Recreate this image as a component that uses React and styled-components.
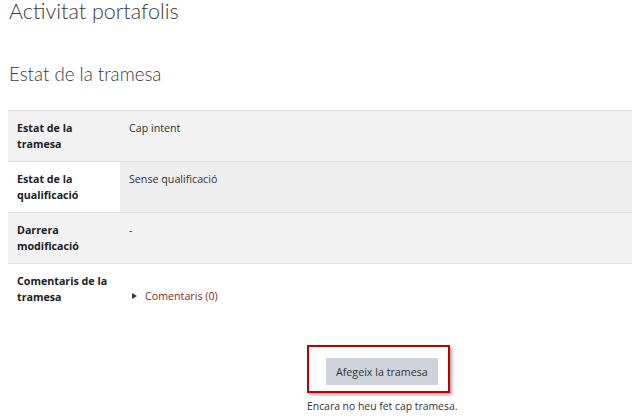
import React from "react";
import styled, { createGlobalStyle } from "styled-components";

const GlobalStyle = createGlobalStyle`
  body {
    margin: 0 0 0 8px;
    background: #fff;
    color: #333;
    font-family: "Open Sans", "Noto Sans", sans-serif;
    overflow: hidden;
  }
`;

const Page = styled.div`
  width: 624px;
`;

const Title = styled.h2`
  margin: 0 0 0 1px;
  padding-top: 1px;
  font-family: Lato, "Open Sans", sans-serif;
  font-size: 21.5px;
  line-height: 21px;
  font-weight: 300;
  color: #3a3a3a;
`;

const SectionTitle = styled.h3`
  margin: 43px 0 26px 1px;
  font-family: Lato, "Open Sans", sans-serif;
  font-size: 18.7px;
  line-height: 19px;
  font-weight: 300;
  color: #3a3a3a;
`;

const StatusTable = styled.table`
  width: 100%;
  border-collapse: collapse;
  font-size: 10.7px;
  line-height: 16px;
`;

const Row = styled.tr`
  border-top: 1px solid #dee2e6;
  background: ${({ striped }) => (striped ? "#f2f2f2" : "transparent")};
`;

const Head = styled.th`
  width: 99px;
  padding: 9px 4px 9px 9px;
  height: 32px;
  text-align: left;
  vertical-align: top;
  font-weight: 700;
  color: #1d2125;
  background: ${({ plain }) => (plain ? "#fff" : "transparent")};
`;

const Cell = styled.td`
  padding: 9px 9px;
  vertical-align: top;
  color: #333;
  background: ${({ shade }) => (shade ? "#ededed" : "transparent")};
`;

const CommentToggle = styled.a`
  display: inline-flex;
  align-items: center;
  gap: 8px;
  margin: 15px 0 0 3px;
  color: #8f1d1d;
  text-decoration: none;
  &::before {
    content: "";
    border-style: solid;
    border-width: 3.5px 0 3.5px 5px;
    border-color: transparent transparent transparent #333;
  }
`;

const Actions = styled.div`
  margin: 31px 0 0 299px;
  display: flex;
  flex-direction: column;
  align-items: flex-start;
`;

const Highlight = styled.div`
  border: 2px solid #c00000;
  padding: 11px 10px 6px 17px;
  box-shadow: 2px 2px 3px rgba(0, 0, 0, 0.35);
`;

const Button = styled.button`
  border: none;
  background: #ced4da;
  color: #333;
  font-family: inherit;
  font-size: 10.7px;
  height: 27px;
  padding: 0 10px;
  white-space: nowrap;
  cursor: pointer;
`;

const Note = styled.div`
  margin-top: 6px;
  font-size: 10.4px;
  color: #333;
`;

export default function App() {
  return (
    <Page>
      <GlobalStyle />
      <Title>Activitat portafolis</Title>
      <SectionTitle>Estat de la tramesa</SectionTitle>
      <StatusTable>
        <tbody>
          <Row striped>
            <Head>Estat de la tramesa</Head>
            <Cell>Cap intent</Cell>
          </Row>
          <Row>
            <Head plain>Estat de la qualificació</Head>
            <Cell shade>Sense qualificació</Cell>
          </Row>
          <Row striped>
            <Head>Darrera modificació</Head>
            <Cell>-</Cell>
          </Row>
          <Row>
            <Head>Comentaris de la tramesa</Head>
            <Cell>
              <CommentToggle href="#">Comentaris (0)</CommentToggle>
            </Cell>
          </Row>
        </tbody>
      </StatusTable>
      <Actions>
        <Highlight>
          <Button>Afegeix la tramesa</Button>
        </Highlight>
        <Note>Encara no heu fet cap tramesa.</Note>
      </Actions>
    </Page>
  );
}
